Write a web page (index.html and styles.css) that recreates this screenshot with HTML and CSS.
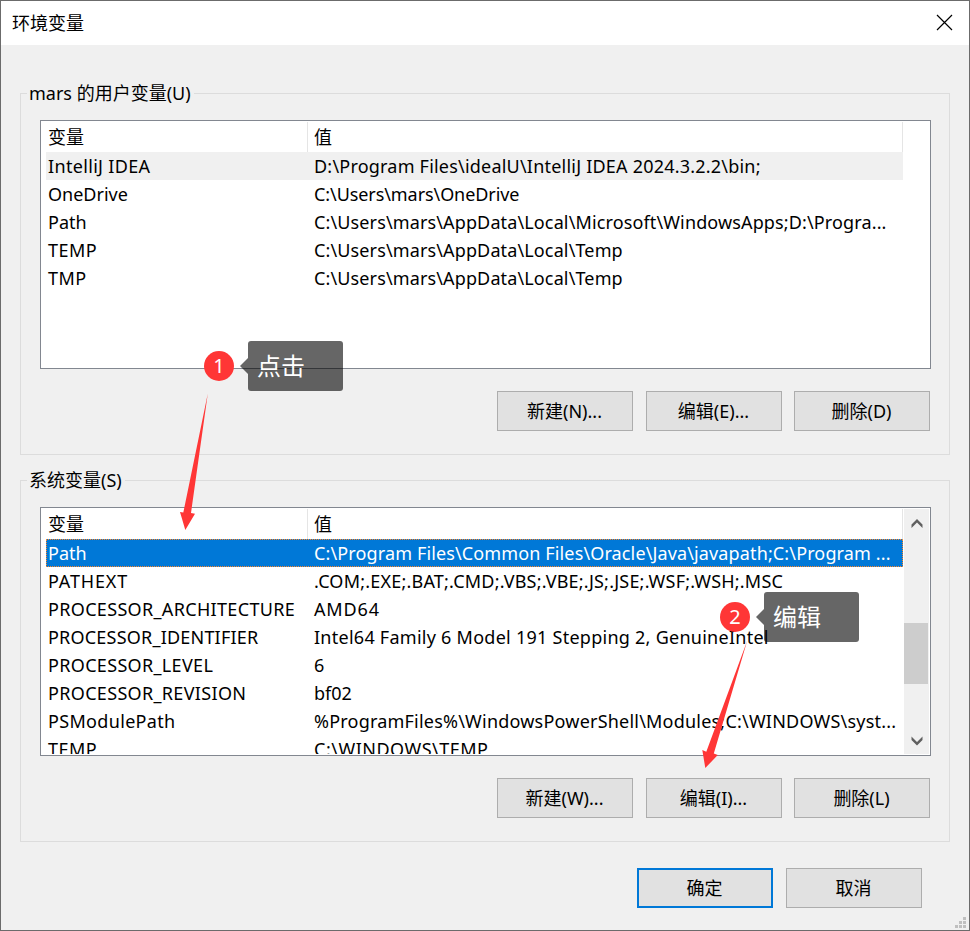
FILE: index.html
```html
<!DOCTYPE html>
<html lang="zh-CN">
<head>
<meta charset="utf-8">
<title>环境变量</title>
<link rel="stylesheet" href="styles.css">
</head>
<body>
<div class="window">
  <header class="titlebar">
    <span>环境变量</span>
    <svg class="close" width="17" height="17" viewBox="0 0 17 17"><path d="M1 1L16 16M16 1L1 16"/></svg>
  </header>
  <main class="content">
    <section class="group">
      <h2 class="legend">mars 的用户变量(U)</h2>
      <div class="list">
        <div class="table">
          <div class="head"><span>变量</span><span>值</span></div>
          <div class="row hover"><span class="ls-3">IntelliJ IDEA</span><span class="ls-2">D:\Program Files\idealU\IntelliJ IDEA 2024.3.2.2\bin;</span></div>
          <div class="row"><span>OneDrive</span><span class="ls-0">C:\Users\mars\OneDrive</span></div>
          <div class="row"><span>Path</span><span class="ls-1">C:\Users\mars\AppData\Local\Microsoft\WindowsApps;D:\Progra...</span></div>
          <div class="row"><span class="ls-4">TEMP</span><span class="ls-1">C:\Users\mars\AppData\Local\Temp</span></div>
          <div class="row"><span class="ls-4">TMP</span><span class="ls-1">C:\Users\mars\AppData\Local\Temp</span></div>
        </div>
      </div>
      <div class="buttons">
        <button class="btn">新建(N)...</button>
        <button class="btn">编辑(E)...</button>
        <button class="btn last">删除(D)</button>
      </div>
    </section>
    <section class="group">
      <h2 class="legend">系统变量(S)</h2>
      <div class="list">
        <div class="table">
          <div class="head"><span>变量</span><span>值</span></div>
          <div class="row selected"><span>Path</span><span class="ls-1">C:\Program Files\Common Files\Oracle\Java\javapath;C:\Program ...</span></div>
          <div class="row"><span class="ls-5">PATHEXT</span><span class="ls-2">.COM;.EXE;.BAT;.CMD;.VBS;.VBE;.JS;.JSE;.WSF;.WSH;.MSC</span></div>
          <div class="row"><span class="ls-3">PROCESSOR_ARCHITECTURE</span><span class="ls-5">AMD64</span></div>
          <div class="row"><span class="ls-2">PROCESSOR_IDENTIFIER</span><span class="ls-25">Intel64 Family 6 Model 191 Stepping 2, GenuineIntel</span></div>
          <div class="row"><span class="ls-3">PROCESSOR_LEVEL</span><span>6</span></div>
          <div class="row"><span class="ls-3">PROCESSOR_REVISION</span><span>bf02</span></div>
          <div class="row"><span class="ls-3">PSModulePath</span><span class="ls-2">%ProgramFiles%\WindowsPowerShell\Modules;C:\WINDOWS\syst...</span></div>
          <div class="row"><span class="ls-4">TEMP</span><span class="ls-4">C:\WINDOWS\TEMP</span></div>
        </div>
        <div class="scrollbar">
          <svg width="12" height="10" viewBox="0 0 12 10"><path d="M6 0L11.5 5.5V9L6 3.5L.5 9V5.5Z"/></svg>
          <div class="thumb"></div>
          <svg width="12" height="10" viewBox="0 0 12 10"><path d="M6 9.5L11.5 4V.5L6 6L.5 .5V4Z"/></svg>
        </div>
      </div>
      <div class="buttons">
        <button class="btn">新建(W)...</button>
        <button class="btn">编辑(I)...</button>
        <button class="btn last">删除(L)</button>
      </div>
    </section>
    <footer class="footer">
      <button class="btn primary">确定</button>
      <button class="btn">取消</button>
    </footer>
  </main>
  <svg class="grip" width="11" height="11" viewBox="0 0 11 11"><path d="M8 0h3v3h-3zM4 4h3v3h-3zM8 4h3v3h-3zM0 8h3v3h-3zM4 8h3v3h-3zM8 8h3v3h-3z"/></svg>

  <svg class="arrows" width="970" height="931" viewBox="0 0 970 931">
    <path d="M207.8 393.5L191 513L195 513.8L185.3 530L180 512L183.3 512.6Z"/>
    <path d="M747.3 640.5L713.8 753.5L717.8 755L705.3 768L702.3 750L706.3 751.8Z"/>
  </svg>
  <div class="note note-1"><span class="badge">1</span><span class="tip">点击</span></div>
  <div class="note note-2"><span class="badge">2</span><span class="tip">编辑</span></div>
</div>
</body>
</html>
```
FILE: styles.css
```css
* { box-sizing: border-box; }
body {
  margin: 0;
  font-family: "Noto Sans", "Noto Sans CJK SC", sans-serif;
  font-size: 18px;
  color: #000;
}
.window {
  position: relative;
  width: 970px;
  height: 931px;
  border: 1px solid #6b6b6b;
  background: #f0f0f0;
  overflow: hidden;
}
.titlebar {
  display: flex;
  justify-content: space-between;
  align-items: center;
  height: 44px;
  padding: 0 16px 2px 11px;
  background: #fff;
}
.close { fill: none; stroke: #000; stroke-width: 1.2; }
.content { padding: 48px 19px 0; }
.group {
  height: 362px;
  margin-bottom: 25px;
  padding: 0 19px;
  border: 1px solid #dcdcdc;
}
.legend {
  width: fit-content;
  height: 26px;
  margin: -14px 0 14px -13px;
  padding: 0 3px 0 2px;
  background: #f0f0f0;
  font-size: 18px;
  font-weight: 400;
  line-height: 26px;
}
.list {
  display: flex;
  justify-content: space-between;
  width: 891px;
  height: 249px;
  padding: 1px 1px 1px 5px;
  border: 1px solid #828790;
  background: #fff;
  overflow: hidden;
}
.table { width: 857px; height: 245px; overflow: hidden; }
.head, .row { display: grid; grid-template-columns: 262px 1fr; white-space: pre; }
.head { height: 30px; line-height: 30px; }
.head span { border-right: 1px solid #e5e5e5; padding-left: 2px; }
.head span + span { padding-left: 6px; }
.row { height: 28px; line-height: 28px; }
.row span { padding-left: 2px; }
.row span + span { padding-left: 6px; }
.ls-0 { letter-spacing: -.08px; }
.ls-1 { letter-spacing: .13px; }
.ls-2 { letter-spacing: .21px; }
.ls-25 { letter-spacing: .26px; }
.ls-3 { letter-spacing: .33px; }
.ls-4 { letter-spacing: .5px; }
.ls-5 { letter-spacing: .85px; }
.hover { background: #f0f0f0; }
.selected {
  background: #0078d7;
  color: #fff;
  outline: 1px dotted #ff8728;
  outline-offset: -1px;
}
.scrollbar {
  display: flex;
  flex-direction: column;
  align-items: center;
  width: 25px;
  height: 245px;
  padding: 10px 0 8px;
  background: #f0f0f0;
}
.scrollbar svg { flex: none; fill: #606060; }
.scrollbar svg:last-child { margin-top: auto; }
.thumb { align-self: flex-start; width: 24px; height: 61px; margin-top: 94px; background: #cdcdcd; }
.buttons { display: flex; gap: 13px; margin: 22px 0 0 457px; }
.btn {
  width: 136px;
  height: 40px;
  padding: 0 1px 2px 0;
  border: 1px solid #adadad;
  background: #e1e1e1;
  font: inherit;
  color: #000;
}
.btn.last { margin-left: -1px; }
.btn.primary { border: 2px solid #0078d7; }
.footer { display: flex; gap: 13px; margin-left: 617px; padding-top: 1px; }
.grip { position: absolute; left: 954px; top: 916px; fill: #bfbfbf; }
.arrows { position: absolute; left: -1px; top: -1px; fill: #ff3636; }
.note { position: absolute; display: flex; align-items: center; gap: 14px; color: #fff; }
.note-1 { left: 203px; top: 340px; }
.note-2 { left: 719px; top: 591px; }
.badge {
  width: 30px;
  height: 30px;
  border-radius: 50%;
  background: #ff3636;
  font-size: 20px;
  line-height: 29px;
  text-align: center;
}
.tip {
  position: relative;
  width: 95px;
  height: 50px;
  padding-left: 9px;
  border-radius: 3px;
  background: rgba(0, 0, 0, .6);
  font-size: 24px;
  line-height: 50px;
}
.tip::before {
  content: "";
  position: absolute;
  left: -8px;
  top: 17px;
  border: solid transparent;
  border-width: 8px 8px 8px 0;
  border-right-color: rgba(0, 0, 0, .6);
}
```
